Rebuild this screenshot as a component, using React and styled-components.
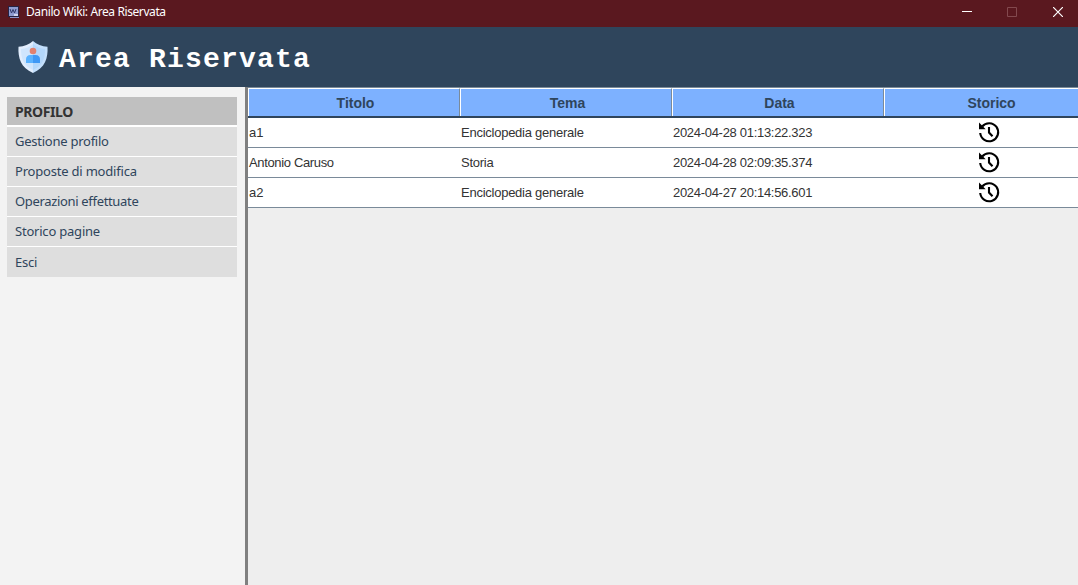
import React from "react";
import styled, { createGlobalStyle } from "styled-components";

const GlobalStyle = createGlobalStyle`
  * { box-sizing: border-box; }
  html, body, #root { height: 100%; }
  body { margin: 0; overflow: hidden; background: #eeeeee; }
`;

const Window = styled.div`
  display: flex;
  flex-direction: column;
  height: 100vh;
  overflow: hidden;
`;

const TitleBar = styled.header`
  display: flex;
  align-items: center;
  flex: 0 0 27px;
  padding: 0 0 3px 8px;
  background: #5a181f;
  color: #fff;
`;

const WindowTitle = styled.span`
  flex: 1;
  margin-left: 7px;
  font: 12px/24px "Noto Sans", sans-serif;
  letter-spacing: -0.4px;
  white-space: nowrap;
`;

const WindowButton = styled.button`
  display: flex;
  align-items: center;
  justify-content: center;
  width: ${(p) => p.$width}px;
  height: 24px;
  padding: 0 0 0 ${(p) => p.$inset || 0}px;
  border: 0;
  background: none;
  color: ${(p) => (p.$disabled ? "#83494e" : "#fff")};
`;

const Banner = styled.div`
  display: flex;
  align-items: center;
  flex: 0 0 60px;
  padding-left: 17px;
  background: #2f455c;
`;

const BannerTitle = styled.h1`
  margin: 5px 0 0 10px;
  color: #fff;
  font: bold 28px/34px "Liberation Mono", monospace;
  letter-spacing: 1.2px;
  white-space: pre;
`;

const Body = styled.div`
  display: flex;
  flex: 1;
  min-height: 0;
`;

const Sidebar = styled.aside`
  flex: 0 0 248px;
  padding: 10px 8px 0 7px;
  border-right: 3px solid #808080;
  background: #f3f3f3;
`;

const Menu = styled.nav`
  display: flex;
  flex-direction: column;
  gap: 1px;
  background: #fff;
`;

const MenuHeading = styled.div`
  height: 28px;
  margin-bottom: 1px;
  padding-left: 8px;
  background: #c0c0c0;
  color: #333;
  font: bold 14px/30px "Noto Sans", sans-serif;
  letter-spacing: -0.4px;
`;

const MenuItem = styled.div`
  height: ${(p) => (p.$last ? 30 : 29)}px;
  padding-left: 8px;
  background: #dedede;
  color: #2f455c;
  font: 13px/${(p) => (p.$last ? 31 : 29)}px "Noto Sans", sans-serif;
  letter-spacing: ${(p) => p.$spacing}px;
  white-space: nowrap;
`;

const TablePane = styled.main`
  flex: 1;
  min-width: 0;
  overflow: hidden;
  background: #eeeeee;
`;

const Row = styled.div`
  display: grid;
  grid-template-columns: repeat(4, 212px);
  width: 848px;
`;

const HeadRow = styled(Row)`
  height: 31px;
  border-top: 1px solid #7a8a99;
  border-bottom: 2px solid #2f455c;
`;

const HeadCell = styled.div`
  height: 28px;
  border-top: 1px solid #fff;
  border-left: 1px solid #fff;
  border-right: 1px solid #7a8a99;
  background: #7db1ff;
  color: #2f455c;
  text-align: center;
  text-indent: 3px;
  font: bold 14px/28px "Liberation Sans", sans-serif;
`;

const DataRow = styled(Row)`
  height: 30px;
  border-bottom: 1px solid #7a8a99;
  background: #fff;
`;

const Cell = styled.div`
  padding-left: 1px;
  color: #333;
  font: 13px/29px "Liberation Sans", sans-serif;
  letter-spacing: ${(p) => p.$spacing || 0}px;
  white-space: nowrap;
`;

const IconCell = styled.div`
  display: flex;
  justify-content: center;
  padding: 2px 3px 0 0;
`;

const AppIcon = () => (
  <svg width="11" height="12" viewBox="0 0 11 12">
    <rect x="0.5" y="0.5" width="10" height="10" fill="#8f9bd0" stroke="#252345" />
    <path d="M2 11.500h9" stroke="#8d93c8" />
    <path d="M2 3l1.500 4L5 3.500l1.500 3.500L8 3" fill="none" stroke="#303768" />
    <path d="M6 8h4v2H6z" fill="#d2d5f2" />
  </svg>
);

const ShieldIcon = () => (
  <svg width="32" height="34" viewBox="0 0 32 34">
    <path d="M16 1C12.500 4.500 7 6.500 1.500 6.800C.8 18 4 28 16 33Z" fill="#e2eefe" />
    <path d="M16 1C19.500 4.500 25 6.500 30.500 6.800C31.200 18 28 28 16 33Z" fill="#c3dffc" />
    <path d="M16 4C13 6.800 8.500 8.600 4 9C4 19 7 26 16 30Z" fill="#cfe5fd" />
    <path d="M16 4C19 6.800 23.500 8.600 28 9C28 19 25 26 16 30Z" fill="#a5d0fa" opacity=".55" />
    <path d="M9 23v-3.500Q9 15 13.500 15H16v8Z" fill="#5ab2ff" />
    <path d="M16 15h2.500Q23 15 23 19.500V23h-7Z" fill="#3f98f5" />
    <circle cx="16" cy="11" r="3.300" fill="#e18170" />
  </svg>
);

const HistoryIcon = () => (
  <svg width="24" height="24" viewBox="0 0 24 24" fill="none" stroke="#000" strokeWidth="2.100">
    <path d="M3.200 13A9 9 0 1 0 5.200 6.500" />
    <path d="M12 7v5.500l3.500 3.700" />
    <path d="M2 2.500v6.700h6.700Z" fill="#000" stroke="none" />
  </svg>
);

const menu = [
  ["Gestione profilo", -0.25],
  ["Proposte di modifica", -0.2],
  ["Operazioni effettuate", -0.33],
  ["Storico pagine", -0.21],
  ["Esci", -0.25],
];

const pages = [
  ["a1", "Enciclopedia generale", "2024-04-28 01:13:22.323"],
  ["Antonio Caruso", "Storia", "2024-04-28 02:09:35.374"],
  ["a2", "Enciclopedia generale", "2024-04-27 20:14:56.601"],
];

export default function App() {
  return (
    <Window>
      <GlobalStyle />
      <TitleBar>
        <AppIcon />
        <WindowTitle>Danilo Wiki: Area Riservata</WindowTitle>
        <WindowButton $width={45} aria-label="Riduci">
          <svg width="10" height="10"><path d="M0 4.500h10" stroke="currentColor" /></svg>
        </WindowButton>
        <WindowButton $width={45} $disabled disabled aria-label="Ingrandisci">
          <svg width="10" height="10"><path d="M.5.5h9v9h-9z" fill="none" stroke="currentColor" /></svg>
        </WindowButton>
        <WindowButton $width={44} $inset={4} aria-label="Chiudi">
          <svg width="10" height="10"><path d="M0 0l10 10M10 0L0 10" stroke="currentColor" strokeWidth="1.200" /></svg>
        </WindowButton>
      </TitleBar>
      <Banner>
        <ShieldIcon />
        <BannerTitle>Area Riservata</BannerTitle>
      </Banner>
      <Body>
        <Sidebar>
          <Menu>
            <MenuHeading>PROFILO</MenuHeading>
            {menu.map(([label, spacing], i) => (
              <MenuItem key={label} $spacing={spacing} $last={i === menu.length - 1}>
                {label}
              </MenuItem>
            ))}
          </Menu>
        </Sidebar>
        <TablePane>
          <HeadRow>
            {["Titolo", "Tema", "Data", "Storico"].map((h) => (
              <HeadCell key={h}>{h}</HeadCell>
            ))}
          </HeadRow>
          {pages.map(([title, theme, date]) => (
            <DataRow key={title}>
              <Cell $spacing={title.length > 2 ? -0.35 : 0}>{title}</Cell>
              <Cell $spacing={-0.25}>{theme}</Cell>
              <Cell $spacing={-0.3}>{date}</Cell>
              <IconCell>
                <HistoryIcon />
              </IconCell>
            </DataRow>
          ))}
        </TablePane>
      </Body>
    </Window>
  );
}
